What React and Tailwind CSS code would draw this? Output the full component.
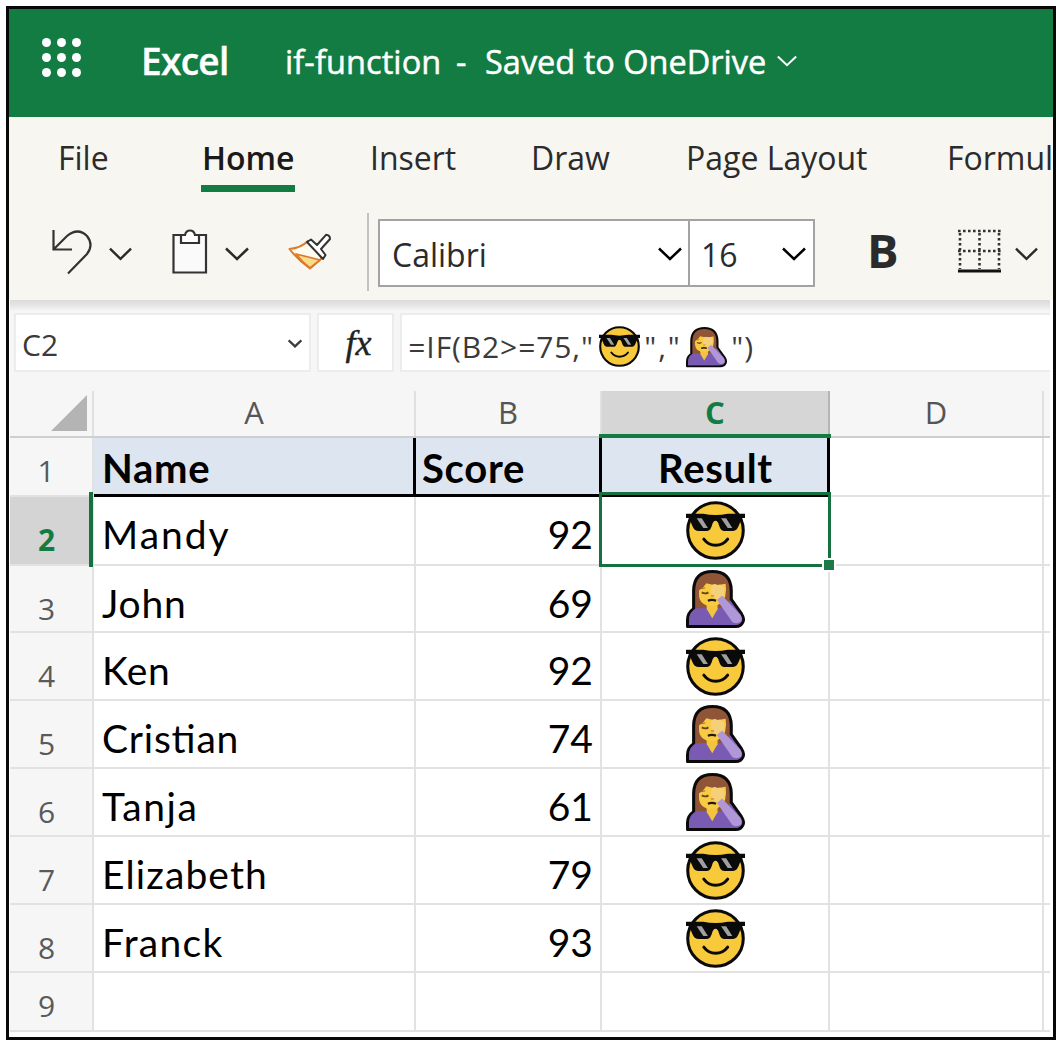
import React from "react";

const OPEN = "font-['Open_Sans','Noto_Sans',sans-serif]";
const LATO = "font-['Lato','Noto_Sans',sans-serif]";

function Cool({ className }) {
  return (
    <svg viewBox="0 0 58 58" className={className} aria-label="sunglasses">
      <circle cx="29" cy="29" r="27.3" fill="#f9c93c" stroke="#0a0a0a" strokeWidth="3" />
      <path d="M0 12.5H17Q29 14.8 41 12.5H58V16.8H55.5Q53.5 20 51.5 25Q49.5 29.5 45.5 29.5H38Q34 29.5 32.5 24Q31.3 19.5 29 19.5Q26.7 19.5 25.5 24Q24 29.5 20 29.5H12.5Q8.5 29.5 6.5 25Q4.5 20 2.5 16.8H0Z" fill="#0a0a0a" />
      <path d="M10.5 17H15.500L21.500 26.500H17ZM34.500 17H39.500L45.500 26.500H41Z" fill="#a0a0a0" />
      <path d="M17.5 37.5Q22 43.5 29 43.5Q36.5 43.5 41 37.500" fill="none" stroke="#0a0a0a" strokeWidth="2.900" strokeLinecap="round" />
    </svg>
  );
}

function Facepalm({ className }) {
  return (
    <svg viewBox="0 0 58 58" className={className} aria-label="facepalm">
      <path d="M1.500 55.500V49Q1.500 42 7.500 38V20Q8 1.500 26 1.500Q44 1.500 44.500 20V29L54.500 43Q57.500 47.500 56 51Q54 55.500 49 55.500Z" fill="#8f5536" stroke="#0a0a0a" strokeWidth="3" strokeLinejoin="round" />
      <path d="M3 54V49Q3 41 10 37.500H34L43.500 30L53.500 44Q56.500 48.500 54.500 51Q52.500 54 48 54Z" fill="#7a5bb4" />
      <path d="M20 34H31V38.500L25.800 47.500L20.500 38.500Z" fill="#f3c43c" />
      <path d="M12.800 20Q17 18 20 13Q29 16 39 13.500Q40 20 38.500 26Q36 35 26 35.500Q13.500 35 12.800 25Z" fill="#f9cb42" />
      <path d="M24.500 17Q27 12 31 15Q35 13 37.500 18L37.500 26L32 29Q25.500 27 24.500 22Z" fill="#f4d07a" />
      <path d="M15.500 22Q19 24 22 22" fill="none" stroke="#5d4420" strokeWidth="1.800" />
      <path d="M15.500 18.500L19 17.500" stroke="#a57a2a" strokeWidth="1" />
      <path d="M21.500 30.200Q25.500 28.500 29.500 30.200" fill="none" stroke="#221a10" strokeWidth="2.200" />
      <path d="M24.500 25.500H27.500" stroke="#dd8a38" strokeWidth="1.600" />
      <path d="M30.500 29.500L35.500 25L53.500 44Q56 49 53.500 51.200Q50 53.500 45.500 51Z" fill="#af97d8" />
    </svg>
  );
}

function Chevron({ className, weight = 2.2 }) {
  return (
    <svg viewBox="0 0 24 14" className={className} fill="none" stroke="currentColor" strokeWidth={weight}>
      <path d="M1 1.500L12 12L23 1.500" />
    </svg>
  );
}

function Waffle() {
  return (
    <div className="mt-[29px] ml-[33px] grid h-[39px] w-[39px] grid-cols-[repeat(3,9px)] grid-rows-[repeat(3,9px)] place-content-between">
      {Array.from({ length: 9 }, (_, i) => (
        <span key={i} className="size-[9px] rounded-full bg-white" />
      ))}
    </div>
  );
}

function TitleBar() {
  return (
    <header className="flex h-[108px] shrink-0 items-start bg-[#127c43] whitespace-nowrap text-white">
      <Waffle />
      <div className="mt-[27px] ml-[60px] w-[144px] text-[37px] leading-[50px] font-semibold tracking-[-0.7px] [-webkit-text-stroke:0.4px]">Excel</div>
      <div className="mt-[26px] flex text-[32.5px] leading-[54px] [-webkit-text-stroke:0.5px]">
        <span className="w-[171px] tracking-[0.1px]">if-function</span>
        <span className="w-[29px]">-</span>
        <span>Saved to OneDrive</span>
      </div>
      <Chevron className="mt-[46px] ml-[11px] h-[12px] w-[20px]" weight={2.4} />
    </header>
  );
}

const TABS = [
  ["File", "w-[144px]"],
  ["Home", "w-[168px]"],
  ["Insert", "w-[161px]"],
  ["Draw", "w-[155px]"],
  ["Page Layout", "w-[261px]"],
  ["Formul", "w-[108px]"],
];

function Tabs() {
  return (
    <nav className="flex h-[75px] pl-[49px] text-[32px] leading-[81px] whitespace-nowrap text-[#2b2b2b]">
      {TABS.map(([name, width]) => (
        <div key={name} className={`${width} shrink-0`}>
          {name === "Home" ? (
            <div className="ml-[-1px] h-[75px] w-[94px] border-b-[7px] border-[#127c43] pl-px font-semibold text-[#1a1a1a]">{name}</div>
          ) : (
            name
          )}
        </div>
      ))}
    </nav>
  );
}

function Toolbar() {
  return (
    <div className="flex h-[108px] items-start pt-[23px] text-[#2b2b2b]">
      <svg viewBox="0 0 42 46" className="mt-[14px] ml-[42px] h-[46px] w-[42px]" fill="none" stroke="#333" strokeWidth="2.200">
        <path d="M2.500 1V20.500H21M2.500 20.500L16 7Q27 -2 36 7Q43 16 36 25L17 44.500" />
      </svg>
      <Chevron className="mt-[32px] ml-[16px] h-[14px] w-[23px]" weight={2.5} />
      <svg viewBox="0 0 36 46" className="mt-[14px] ml-[40px] h-[46px] w-[36px]" fill="none" stroke="#333" strokeWidth="2.200">
        <path d="M11 6H1.500V43.500H34V6H25" fill="#fafafa" />
        <path d="M9 6H13Q14 1.500 18 1.500Q22 1.500 23 6H27V14H9Z" fill="#fff" />
      </svg>
      <Chevron className="mt-[32px] ml-[17px] h-[14px] w-[24px]" weight={2.5} />
      <svg viewBox="0 0 44 38" className="mt-[18px] ml-[39px] h-[38px] w-[44px]" strokeLinejoin="round">
        <path d="M1.500 16Q13 15 20 8L34 25L22 35.500Q10 27 1.500 16Z" fill="#fdfaf0" stroke="#dd7a28" strokeWidth="2" />
        <path d="M8 21L32 27L22 35Q14 29 8 21Z" fill="#f8dc8e" stroke="#dd7a28" strokeWidth="1.800" />
        <path d="M19 9L23 6.500L29 12L38 1.800Q42 2 42 6L33 16L37.500 22L35 26Z" fill="#fff" stroke="#333" strokeWidth="2" />
      </svg>
      <div className="mt-[-2px] ml-[35px] h-[78px] w-[2px] bg-[#c4c3c1]" />
      <div className="mt-[4px] ml-[9px] flex h-[68px] w-[437px] border-2 border-[#a3a3a3] bg-white text-[32px] leading-[67px]">
        <div className="flex w-[310px] items-start border-r-2 border-[#a3a3a3] pl-[12px]">
          <span className="w-[266px]">Calibri</span>
          <Chevron className="mt-[26px] h-[14px] w-[24px] text-black" weight={2.5} />
        </div>
        <div className="flex items-start pl-[11px]">
          <span className="w-[81px]">16</span>
          <Chevron className="mt-[26px] h-[14px] w-[24px] text-black" weight={2.5} />
        </div>
      </div>
      <div className="mt-[10px] ml-[52px] w-[40px] text-[47px] leading-[50px] font-bold">B</div>
      <svg viewBox="0 0 43 44" className="mt-[14px] ml-[51px] h-[44px] w-[43px]" fill="none" stroke="#333">
        <path d="M0 2H43M0 22H43M2 4V40M21.500 4V40M41 4V40" strokeWidth="2.600" strokeDasharray="2.600 2.400" />
        <path d="M0 42H43" strokeWidth="3.200" stroke="#111" />
      </svg>
      <Chevron className="mt-[32px] ml-[14px] h-[14px] w-[23px]" weight={2.5} />
    </div>
  );
}

function FormulaBar() {
  return (
    <div className="flex h-[91px] items-start gap-[6px] bg-[linear-gradient(#dcdada_0px,#e3e2e2_4px,#f6f6f6_11px)] pt-[13px] pl-[4px] whitespace-nowrap text-[#3a3a3a]">
      <div className="flex h-[59px] w-[298px] items-start border-2 border-[#ececec] bg-white pl-[6px]">
        <span className="w-[266px] text-[30px] leading-[59px]">C2</span>
        <Chevron className="mt-[24px] h-[9px] w-[14px]" weight={4} />
      </div>
      <div className="h-[59px] w-[77px] border-2 border-[#ececec] bg-white pl-[26px] font-['Liberation_Serif',serif] text-[36px] leading-[57px] text-[#222] italic [-webkit-text-stroke:0.4px]">fx</div>
      <div className="flex h-[59px] w-[651px] items-start border-y-2 border-l-2 border-[#ececec] bg-white pl-[6px] text-[30px] leading-[64px]">
        <span className="w-[191px] tracking-[0.9px]">=IF(B2&gt;=75,"</span>
        <Cool className="mt-[11px] size-[41px]" />
        <span className="ml-[4px] w-[42px] tracking-[1.900px]">","</span>
        <Facepalm className="mt-[12px] size-[41px]" />
        <span className="ml-[4px] tracking-[1px]">")</span>
      </div>
    </div>
  );
}

const COLS = "grid-cols-[84px_322px_186px_228px_214px_6px] grid-rows-1";

function ColumnHeads() {
  const line = "border-r-2 border-[#e0e0e0]";
  return (
    <div className={`grid ${COLS} h-[47px] border-b-2 border-[#cfcfcf] bg-[#f6f6f6] text-center text-[31px] leading-[43px] text-[#555]`}>
      <div className={`flex justify-end pt-[4px] pr-[5px] ${line}`}>
        <svg viewBox="0 0 36 36" className="size-[36px]">
          <path d="M36 0V36H0Z" fill="#b4b4b4" />
        </svg>
      </div>
      <div className={line}>A</div>
      <div className={line}>B</div>
      <div className="border-r-2 border-[#b5b5b5] bg-[#d6d6d6] font-bold text-[#127c43]">C</div>
      <div className={line}>D</div>
      <div />
    </div>
  );
}

const ROWS = [
  ["Mandy", 92, true, "h-[69px]", "tracking-[2px]"],
  ["John", 69, false, "h-[67px]", "tracking-[0.8px]"],
  ["Ken", 92, true, "h-[68px]", "tracking-[0.5px]"],
  ["Cristian", 74, false, "h-[68px]", "tracking-[0.8px]"],
  ["Tanja", 61, false, "h-[68px]", "tracking-[1.6px]"],
  ["Elizabeth", 79, true, "h-[68px]", "tracking-[1.1px]"],
  ["Franck", 93, true, "h-[68px]", "tracking-[1.3px]"],
];

const CELL = "border-r-2 border-b-2 border-[#e2e2e2]";

function Row({ index, row }) {
  const [name, score, cool, height, tracking] = row;
  const Face = cool ? Cool : Facepalm;
  return (
    <div className={`grid ${COLS} ${height} text-[39px] leading-[74px] text-black`}>
      <div className={`${CELL} pr-[9px] text-center text-[30px] leading-[86px] ${index === 2 ? "bg-[#d4d4d4] font-bold text-[#127c43]" : "bg-[#f6f6f6] text-[#5a5a5a]"}`}>{index}</div>
      <div className={`${CELL} ${LATO} ${tracking} pl-[8px] [font-feature-settings:'liga'_1]`}>{name}</div>
      <div className={`${CELL} ${LATO} pr-[7px] text-right`}>{score}</div>
      <div className={`${CELL} flex items-start justify-center pt-[4px]`}>
        <Face className="size-[59px]" />
      </div>
      <div className={CELL} />
      <div className="border-b-2 border-[#e2e2e2]" />
    </div>
  );
}

function Sheet() {
  const head = `${LATO} border-r-[3px] border-b-[3px] border-black bg-[#dde5f0] font-bold`;
  return (
    <div className="relative">
      <ColumnHeads />
      <div className={`grid ${COLS} h-[59px] text-[40px] leading-[61px] tracking-[0.700px] text-black`}>
        <div className={`${CELL} bg-[#f6f6f6] pr-[9px] text-center text-[30px] leading-[66px] text-[#5a5a5a]`}>1</div>
        <div className={`${head} pl-[8px]`}>Name</div>
        <div className={`${head} pl-[6px]`}>Score</div>
        <div className={`${head} pl-[2px] text-center`}>Result</div>
        <div className={CELL} />
        <div className="border-b-2 border-[#e2e2e2]" />
      </div>
      {ROWS.map((row, i) => (
        <Row key={row[0]} index={i + 2} row={row} />
      ))}
      <div className={`grid ${COLS} h-[59px] text-[30px] leading-[66px] text-[#5a5a5a]`}>
        <div className={`${CELL} bg-[#f6f6f6] pr-[9px] text-center`}>9</div>
        <div className={CELL} />
        <div className={CELL} />
        <div className={CELL} />
        <div className={CELL} />
        <div className="border-b-2 border-[#e2e2e2]" />
      </div>
      <div className="absolute top-[43px] left-[589px] h-[4px] w-[232px] bg-[#127c43]" />
      <div className="absolute top-[101px] left-[589px] h-[75px] w-[232px] border-[3px] border-[#17703f]" />
      <div className="absolute top-[101px] left-[79px] h-[75px] w-[4px] bg-[#17703f]" />
      <div className="absolute top-[167px] left-[812px] size-[14px] border-2 border-white bg-[#1b7a45]" />
    </div>
  );
}

export default function App() {
  return (
    <div className={`${OPEN} h-[1047px] w-[1063px] overflow-hidden bg-white pt-[6px] pl-[6px]`}>
      <main className="flex h-[1034px] w-[1050px] flex-col overflow-hidden border-[3px] border-[#080808]">
        <TitleBar />
        <section className="h-[183px] shrink-0 overflow-hidden bg-[#f7f6f1]">
          <Tabs />
          <Toolbar />
        </section>
        <div className="w-[1041px] shrink-0 pl-px">
          <FormulaBar />
          <Sheet />
        </div>
      </main>
    </div>
  );
}
